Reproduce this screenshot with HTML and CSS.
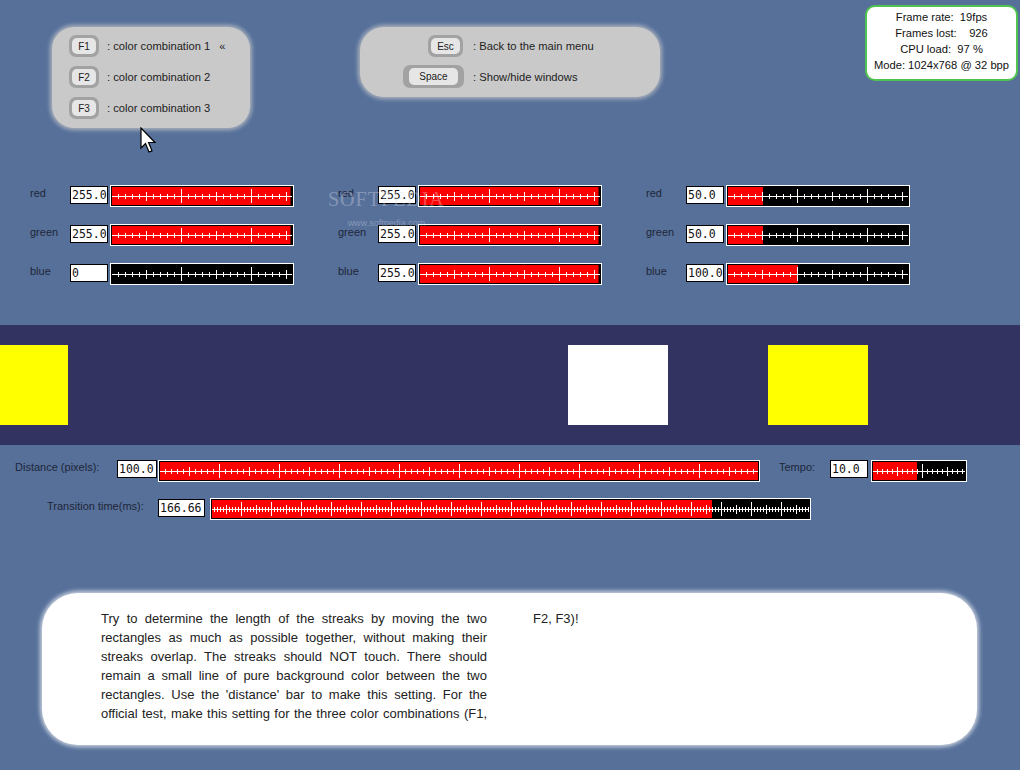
FILE: index.html
```html
<!DOCTYPE html>
<html>
<head>
<meta charset="utf-8">
<title>Streaks test</title>
<link rel="stylesheet" href="styles.css">
</head>
<body>
<div class="top">
  <div class="panel keys-panel">
    <div class="krow"><div class="key"><span class="cap">F1</span></div><span class="klabel">: color combination 1</span><span class="mark">«</span></div>
    <div class="krow"><div class="key"><span class="cap">F2</span></div><span class="klabel">: color combination 2</span></div>
    <div class="krow"><div class="key"><span class="cap">F3</span></div><span class="klabel">: color combination 3</span></div>
  </div>
  <div class="panel menu-panel">
    <div class="mrow"><div class="kcol"><div class="key key-esc"><span class="cap">Esc</span></div></div><span class="klabel">: Back to the main menu</span></div>
    <div class="mrow"><div class="kcol"><div class="key key-space"><span class="cap">Space</span></div></div><span class="klabel">: Show/hide windows</span></div>
  </div>
  <div class="stats">
    <div class="sline">Frame rate:  19fps</div>
    <div class="sline">Frames lost:    926</div>
    <div class="sline">CPU load:  97 %</div>
    <div class="sline">Mode: 1024x768 @ 32 bpp</div>
  </div>
</div>

<div class="rgb">
  <div class="col">
    <div class="row"><span class="lbl">red</span><span class="val">255.0</span><div class="slider rgbscale" style="--v:178.5px"></div></div>
    <div class="row"><span class="lbl">green</span><span class="val">255.0</span><div class="slider rgbscale" style="--v:178.5px"></div></div>
    <div class="row"><span class="lbl">blue</span><span class="val">0</span><div class="slider rgbscale" style="--v:0px"></div></div>
  </div>
  <div class="col">
    <div class="row"><span class="lbl">red</span><span class="val">255.0</span><div class="slider rgbscale" style="--v:178.5px"></div></div>
    <div class="row"><span class="lbl">green</span><span class="val">255.0</span><div class="slider rgbscale" style="--v:178.5px"></div></div>
    <div class="row"><span class="lbl">blue</span><span class="val">255.0</span><div class="slider rgbscale" style="--v:178.5px"></div></div>
  </div>
  <div class="col">
    <div class="row"><span class="lbl">red</span><span class="val">50.0</span><div class="slider rgbscale" style="--v:35px"></div></div>
    <div class="row"><span class="lbl">green</span><span class="val">50.0</span><div class="slider rgbscale" style="--v:35px"></div></div>
    <div class="row"><span class="lbl">blue</span><span class="val">100.0</span><div class="slider rgbscale" style="--v:70px"></div></div>
  </div>
</div>

<div class="band">
  <div class="rect rect-yellow rect-first"></div>
  <div class="rect rect-white"></div>
  <div class="rect rect-yellow rect-last"></div>
</div>

<div class="controls">
  <div class="crow">
    <span class="clbl dist-lbl">Distance (pixels):</span>
    <span class="val val-dist">100.0</span>
    <div class="slider distscale" style="--v:100%"></div>
    <span class="clbl tempo-lbl">Tempo:</span>
    <span class="val val-tempo">10.0</span>
    <div class="slider temposcale" style="--v:44px"></div>
  </div>
  <div class="crow">
    <span class="clbl time-lbl">Transition time(ms):</span>
    <span class="val val-time">166.66</span>
    <div class="slider timescale" style="--v:500px"></div>
  </div>
</div>

<div class="info">
  <div class="info-text">Try to determine the length of the streaks by moving the two rectangles as much as possible together, without making their streaks overlap. The streaks should NOT touch. There should remain a small line of pure background color between the two rectangles. Use the 'distance' bar to make this setting. For the official test, make this setting for the three color combinations (F1, F2, F3)!</div>
</div>

<div class="watermark"><span class="wm-big">SOFTPEDIA</span><span class="wm-small">www.softpedia.com</span></div>

<svg class="cursor" width="18" height="27" viewBox="0 0 18 27">
  <path d="M1 1 L1 21 L5.5 16.5 L9 25 L12 23.8 L8.6 15.5 L15 15.5 Z" fill="#fff" stroke="#000" stroke-width="1.2" stroke-linejoin="miter"/>
</svg>
</body>
</html>
```
FILE: styles.css
```css
html, body {
  margin: 0;
  padding: 0;
}
body {
  width: 1020px;
  height: 770px;
  background: #56709a;
  font-family: "Liberation Sans", Arial, sans-serif;
  color: #222;
  position: relative;
  overflow: hidden;
}

/* ---------- top ---------- */
.top {
  display: flex;
  align-items: flex-start;
  height: 180px;
}
.panel {
  box-sizing: border-box;
  background: #c9c9c9;
  box-shadow: 0 0 4px 2px rgba(201, 201, 201, 0.75);
}
.keys-panel {
  margin: 27px 0 0 52px;
  width: 198px;
  height: 101px;
  border-radius: 22px;
  padding: 8px 0 0 17px;
  display: flex;
  flex-direction: column;
  gap: 9px;
}
.krow, .mrow {
  display: flex;
  align-items: center;
}
.key {
  box-sizing: border-box;
  width: 30px;
  height: 22px;
  border-radius: 7px;
  background: #a2a2a2;
  padding: 3px;
  display: flex;
}
.cap {
  flex: 1;
  border-radius: 5px;
  background: #e6e6e6;
  font-size: 10px;
  display: flex;
  align-items: center;
  justify-content: center;
  color: #222;
}
.klabel {
  font-size: 11.2px;
  margin-left: 8px;
  color: #222;
}
.mark {
  font-size: 11px;
  margin-left: 9px;
}
.menu-panel {
  margin: 27px 0 0 110px;
  width: 300px;
  height: 70px;
  border-radius: 24px;
  padding-top: 8px;
  display: flex;
  flex-direction: column;
  gap: 8px;
}
.kcol {
  width: 103px;
  display: flex;
  justify-content: flex-end;
}
.key-esc {
  width: 35px;
  height: 22px;
}
.key-space {
  width: 61px;
  height: 23px;
  margin-right: -1px;
  padding: 3px 6px;
}
.mrow .klabel {
  margin-left: 10px;
}
.stats {
  box-sizing: border-box;
  margin: 5px 2px 0 auto;
  width: 153px;
  height: 76px;
  border: 2px solid #4fc24f;
  border-radius: 10px;
  background: #fff;
  padding-top: 2px;
  font-size: 11.2px;
  line-height: 16px;
  text-align: center;
  color: #111;
}
.sline {
  white-space: pre;
}

/* ---------- RGB sliders ---------- */
.rgb {
  box-sizing: border-box;
  height: 145px;
  padding: 5px 0 0 30px;
  display: flex;
  gap: 44px;
}
.col {
  display: flex;
  flex-direction: column;
  gap: 17px;
}
.row {
  display: flex;
  align-items: flex-start;
}
.lbl {
  width: 40px;
  font-size: 11px;
  line-height: 13px;
  padding-top: 2px;
  color: #1e2638;
}
.val {
  box-sizing: border-box;
  width: 38px;
  height: 18px;
  margin-top: 1px;
  background: #fff;
  border: 1px solid #000;
  font-family: "DejaVu Sans Mono", "Liberation Mono", monospace;
  font-size: 11.5px;
  line-height: 16px;
  padding-left: 1px;
  color: #111;
  white-space: nowrap;
  overflow: hidden;
}
.slider {
  --s: 7px;
  --m: 35px;
  --l: 70px;
  box-sizing: border-box;
  height: 22px;
  border: 1px solid #fff;
  padding: 1px;
  background:
    linear-gradient(#fff, #fff) 0 50% / 100% 1px no-repeat,
    repeating-linear-gradient(90deg, transparent 0 calc(var(--s) - 1px), #fff calc(var(--s) - 1px) var(--s)) 0 50% / 100% 5px no-repeat,
    repeating-linear-gradient(90deg, transparent 0 calc(var(--m) - 1px), #fff calc(var(--m) - 1px) var(--m)) 0 50% / 100% 9px no-repeat,
    repeating-linear-gradient(90deg, transparent 0 calc(var(--l) - 1px), #fff calc(var(--l) - 1px) var(--l)) 0 50% / 100% 14px no-repeat,
    linear-gradient(#f00, #f00) 0 0 / var(--v) 100% no-repeat,
    #000;
  background-origin: content-box;
  background-clip: content-box;
  box-shadow: inset 0 0 0 1px #000;
}
.rgbscale {
  width: 184px;
  margin-left: 2px;
}

/* ---------- band ---------- */
.band {
  height: 120px;
  background: #333361;
  display: flex;
  align-items: flex-start;
  padding-top: 20px;
  box-sizing: border-box;
}
.rect {
  height: 80px;
  width: 100px;
}
.rect-yellow {
  background: #ffff00;
}
.rect-white {
  background: #fff;
  margin-left: 500px;
}
.rect-first {
  width: 68px;
}
.rect-last {
  margin-left: 100px;
}

/* ---------- controls ---------- */
.controls {
  padding-top: 15px;
  display: flex;
  flex-direction: column;
  gap: 16px;
}
.crow {
  display: flex;
  align-items: flex-start;
}
.clbl {
  font-size: 11px;
  line-height: 13px;
  padding-top: 1px;
  color: #1e2638;
}
.dist-lbl {
  margin-left: 15px;
  width: 102px;
}
.val-dist {
  width: 40px;
  margin-top: 0;
}
.distscale {
  --s: 6px;
  --m: 30px;
  --l: 60px;
  width: 602px;
  margin-left: 1px;
}
.tempo-lbl {
  margin-left: 19px;
  width: 51px;
}
.val-tempo {
  width: 38px;
  margin-top: 0;
}
.temposcale {
  --s: 5px;
  --m: 25px;
  --l: 50px;
  width: 96px;
  margin-left: 3px;
}
.time-lbl {
  margin-left: 47px;
  width: 111px;
  padding-top: 2px;
}
.val-time {
  width: 47px;
}
.timescale {
  --s: 3px;
  --m: 15px;
  --l: 30px;
  width: 601px;
  margin-left: 5px;
}

/* ---------- info ---------- */
.info {
  box-sizing: border-box;
  margin: 73px 0 0 42px;
  width: 935px;
  height: 152px;
  background: #fff;
  border-radius: 36px;
  box-shadow: 0 0 4px 2px rgba(255, 255, 255, 0.7);
  padding: 16px 58px 0 59px;
}
.info-text {
  height: 114px;
  column-count: 2;
  column-gap: 46px;
  column-fill: auto;
  font-size: 13px;
  line-height: 19px;
  text-align: justify;
  color: #222;
  widows: 1;
  orphans: 1;
}

/* ---------- overlays ---------- */
.watermark {
  position: absolute;
  left: 328px;
  top: 188px;
  display: flex;
  flex-direction: column;
  align-items: center;
  color: rgba(225, 225, 235, 0.35);
  font-family: "Liberation Serif", serif;
  pointer-events: none;
}
.wm-big {
  font-size: 20px;
  letter-spacing: 1px;
  line-height: 22px;
}
.wm-small {
  font-family: "Liberation Sans", sans-serif;
  font-size: 9px;
  margin-top: 8px;
}
.cursor {
  position: absolute;
  left: 140px;
  top: 127px;
}
```
